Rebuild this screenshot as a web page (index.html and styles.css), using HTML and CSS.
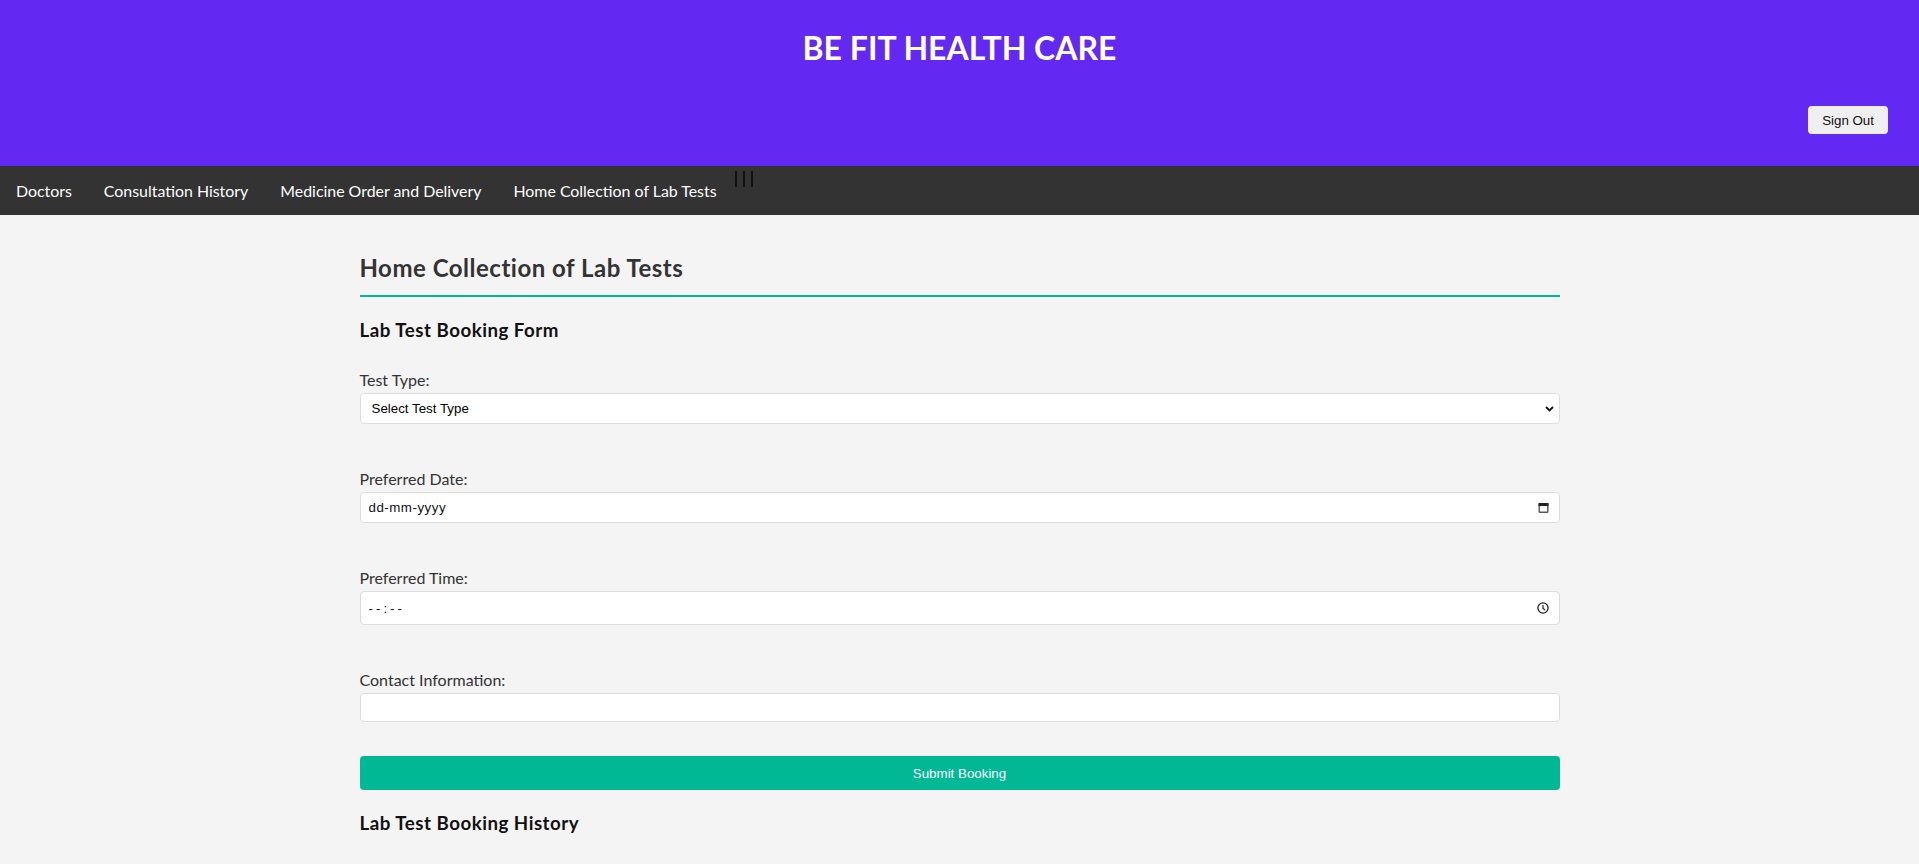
FILE: index.html
```html
<!DOCTYPE html>
<html lang="en">
<head>
<meta charset="utf-8">
<title>BE FIT HEALTH CARE - Home Collection of Lab Tests</title>
<link rel="stylesheet" href="styles.css">
</head>
<body>
<header class="site-header">
  <h1 class="brand">BE FIT HEALTH CARE</h1>
  <div class="header-actions">
    <button type="button" class="signout">Sign Out</button>
  </div>
</header>
<nav class="topnav">
  <a href="#" class="nav-link">Doctors</a>
  <a href="#" class="nav-link">Consultation History</a>
  <a href="#" class="nav-link">Medicine Order and Delivery</a>
  <a href="#" class="nav-link">Home Collection of Lab Tests</a>
  <div class="menu-bars"><span class="bar"></span><span class="bar"></span><span class="bar"></span></div>
</nav>
<main class="content">
  <h2 class="page-title">Home Collection of Lab Tests</h2>
  <h3 class="section-title">Lab Test Booking Form</h3>
  <form class="booking-form">
    <div class="form-group">
      <label class="form-label" for="testType">Test Type:</label>
      <div class="field select-field">
        <select id="testType" class="select-input">
          <option>Select Test Type</option>
        </select>
        <svg class="field-icon chevron" width="9" height="6" viewBox="0 0 9 6"><path d="M1 1l3.5 3.5L8 1" fill="none" stroke="#111" stroke-width="1.8"/></svg>
      </div>
    </div>
    <div class="form-group">
      <label class="form-label" for="prefDate">Preferred Date:</label>
      <div class="field date-field">
        <input id="prefDate" class="plain-input date-text" type="text" placeholder="dd-mm-yyyy">
        <svg class="field-icon" width="11" height="11" viewBox="0 0 11 11"><rect x="1.2" y="1.8" width="8.6" height="8.4" rx="0.8" fill="none" stroke="#555" stroke-width="1.4"/><rect x="0.5" y="1" width="10" height="3" fill="#222"/></svg>
      </div>
    </div>
    <div class="form-group">
      <label class="form-label" for="prefTime">Preferred Time:</label>
      <div class="field time-field">
        <input id="prefTime" class="plain-input time-text" type="text" placeholder="--:--">
        <svg class="field-icon" width="12" height="12" viewBox="0 0 12 12"><circle cx="6" cy="6" r="5.1" fill="none" stroke="#222" stroke-width="1.3"/><path d="M6 3v3.2l2 2" fill="none" stroke="#222" stroke-width="1.2"/></svg>
      </div>
    </div>
    <div class="form-group last">
      <label class="form-label" for="contact">Contact Information:</label>
      <input id="contact" class="text-input" type="text">
    </div>
    <button type="submit" class="submit-btn">Submit Booking</button>
  </form>
  <h3 class="section-title history">Lab Test Booking History</h3>
</main>
</body>
</html>
```
FILE: styles.css
```css
html, body {
  margin: 0;
  padding: 0;
}
body {
  background: #f4f4f4;
  font-family: Lato, "Open Sans", sans-serif;
  color: #333;
}
.site-header {
  background: #6328f1;
  padding: 28px 31px 32px;
  display: flex;
  flex-direction: column;
}
.brand {
  margin: 0 0 38px;
  text-align: center;
  color: #fff;
  font-size: 32px;
  line-height: 40px;
  font-weight: 700;
}
.header-actions {
  display: flex;
  justify-content: flex-end;
}
.signout {
  height: 28px;
  padding: 0 14px;
  border: none;
  border-radius: 4px;
  background: #efefef;
  color: #111;
  font-family: "Liberation Sans", Arial, sans-serif;
  font-size: 13.33px;
  cursor: pointer;
}
.topnav {
  background: #333;
  display: flex;
  align-items: flex-start;
}
.nav-link {
  display: block;
  padding: 14px 16px;
  color: #fff;
  text-decoration: none;
  font-size: 15.9px;
  line-height: 21px;
}
.menu-bars {
  display: flex;
  gap: 6px;
  margin: 5px 0 0 2px;
}
.bar {
  display: block;
  width: 2px;
  height: 16px;
  background: #111;
}
.content {
  max-width: 1200px;
  margin: 0 auto;
  padding: 37px 0 20px;
}
.page-title {
  margin: 0;
  font-size: 24px;
  line-height: 32px;
  font-weight: 700;
  letter-spacing: 0.5px;
  color: #333;
  padding-bottom: 11px;
  border-bottom: 2px solid #00b894;
}
.section-title {
  margin: 21px 0 27px;
  font-size: 18.72px;
  line-height: 24px;
  font-weight: 700;
  letter-spacing: 0.5px;
  color: #111;
}
.section-title.history {
  margin: 21px 0 0;
}
.booking-form {
  display: flex;
  flex-direction: column;
}
.form-group {
  display: flex;
  flex-direction: column;
  margin-bottom: 44px;
}
.form-group.last {
  margin-bottom: 34px;
}
.form-label {
  font-size: 16px;
  line-height: 22px;
  margin-bottom: 2px;
  color: #333;
}
.field {
  position: relative;
  display: flex;
  align-items: center;
  box-sizing: border-box;
  height: 31px;
  border: 1px solid #ddd;
  border-radius: 4px;
  background: #fff;
  padding: 0 10px 0 8px;
}
.time-field {
  height: 34px;
}
.select-field {
  padding: 0;
}
.select-input {
  appearance: none;
  -webkit-appearance: none;
  flex: 1;
  height: 100%;
  border: none;
  background: transparent;
  padding: 0 0 0 11px;
  font-family: "Liberation Sans", Arial, sans-serif;
  font-size: 13.33px;
  color: #000;
  outline: none;
}
.chevron {
  position: absolute;
  right: 5px;
  top: 12px;
  pointer-events: none;
}
.plain-input {
  flex: 1;
  border: none;
  outline: none;
  background: transparent;
  padding: 0;
  font-family: "Liberation Sans", Arial, sans-serif;
  font-size: 13.33px;
  color: #000;
}
.plain-input::placeholder {
  color: #111;
  opacity: 1;
}
.date-text {
  letter-spacing: 0.5px;
}
.time-text {
  letter-spacing: 3px;
}
.field-icon {
  flex: none;
  display: block;
}
.text-input {
  box-sizing: border-box;
  height: 29px;
  border: 1px solid #ddd;
  border-radius: 4px;
  background: #fff;
  padding: 0 8px;
  font-family: "Liberation Sans", Arial, sans-serif;
  font-size: 13.33px;
  outline: none;
}
.submit-btn {
  height: 34px;
  border: none;
  border-radius: 4px;
  background: #00b894;
  color: #fff;
  font-family: "Liberation Sans", Arial, sans-serif;
  font-size: 13.33px;
  cursor: pointer;
}
```
